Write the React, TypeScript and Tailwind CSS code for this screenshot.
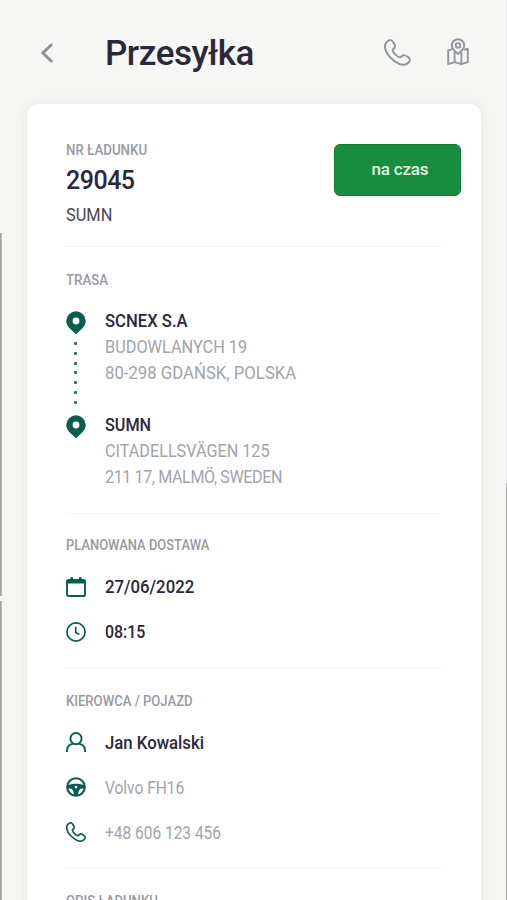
import type { ReactNode } from "react";

function PhoneIcon({ className, stroke }: { className: string; stroke: number }) {
  return (
    <svg viewBox="0 0 26 26" fill="none" stroke="currentColor" strokeWidth={stroke} strokeLinejoin="round" className={className}>
      <path d="M2 3.6C3.2 2 4.6 1 6.3 1C7.6 1 8.3 2.2 9.3 3.8C10.3 5.4 11.2 6.6 10.4 8C9.8 9 8.6 9.6 8.4 10.5C8.2 11.8 10 14 11.4 15.3C13 16.8 14.6 18 15.8 17.6C16.8 17.3 17.4 16 18.6 15.6C19.9 15.2 21.2 16.1 22.6 17C24.2 18 25.2 18.8 25 20.2C24.8 21.7 23.4 23.2 22 24C20 25.1 17.4 25.1 14.6 24C11.2 22.6 8.4 20.4 5.8 17.6C3.2 14.8 1.4 11.6 1 8.6C0.8 6.6 1 5 2 3.6Z" />
    </svg>
  );
}

function MapIcon() {
  return (
    <svg viewBox="0 0 22 28" fill="none" stroke="currentColor" strokeWidth="1.9" strokeLinejoin="round" className="w-[22px] h-[28px]">
      <path d="M11 16C8.4 13.6 4.8 11 4.8 7.4A6.2 6.2 0 0 1 17.2 7.4C17.2 11 13.6 13.6 11 16Z" />
      <circle cx="11" cy="7.4" r="2.3" />
      <path d="M5.6 11.2L1.2 12.4V26.2L7.6 24.2L14.4 26.2L20.8 24.2V10.8L16.4 11.8M7.6 13.6V24.2M14.4 13.6V26.2" />
    </svg>
  );
}

function PinIcon() {
  return (
    <svg viewBox="0 0 20 24" className="w-5 h-6 shrink-0 text-[#075e4f]">
      <path
        fill="currentColor"
        fillRule="evenodd"
        d="M10 0.3A9.7 9.7 0 0 1 19.7 10C19.7 13 18.3 15.4 16.2 17.4L10 23.3L3.8 17.4C1.7 15.4 0.3 13 0.3 10A9.7 9.7 0 0 1 10 0.3ZM10 6.6A3.4 3.4 0 1 0 10 13.4A3.4 3.4 0 0 0 10 6.6Z"
      />
    </svg>
  );
}

function CalendarIcon() {
  return (
    <svg viewBox="0 0 20 20" className="w-5 h-5">
      <rect x="1" y="3" width="18" height="16" rx="1.6" fill="none" stroke="currentColor" strokeWidth="1.9" />
      <path d="M1 3H19V6.4H1ZM4.4 0.2H7V4H4.4ZM13 0.2H15.6V4H13Z" fill="currentColor" />
    </svg>
  );
}

function ClockIcon() {
  return (
    <svg viewBox="0 0 20 20" fill="none" stroke="currentColor" strokeWidth="1.7" className="w-5 h-5">
      <circle cx="10" cy="10" r="9.1" />
      <path d="M9.7 4.8V10.5L13.4 12.6" />
    </svg>
  );
}

function UserIcon() {
  return (
    <svg viewBox="0 0 20 20" fill="none" stroke="currentColor" strokeWidth="1.9" className="w-5 h-5">
      <circle cx="10" cy="6.6" r="5.6" />
      <path d="M1 20V18.6C1 14.8 3.6 12.2 7.4 11.6M19 20V18.6C19 14.8 16.4 12.2 12.6 11.6" />
    </svg>
  );
}

function WheelIcon() {
  return (
    <svg viewBox="0 0 20 20" className="w-5 h-5">
      <circle cx="10" cy="10" r="8.8" fill="none" stroke="currentColor" strokeWidth="2.1" />
      <path
        fill="currentColor"
        fillRule="evenodd"
        d="M1 8.4C6 6.2 14 6.2 19 8.4V11.4H16C13.6 11.6 12.4 13.4 12 19H8C7.6 13.4 6.4 11.6 4 11.4H1ZM10 8.7A1.4 1.4 0 1 0 10 11.5A1.4 1.4 0 0 0 10 8.7Z"
      />
    </svg>
  );
}

function Label({ children, className }: { children: ReactNode; className: string }) {
  return <div className={`origin-left text-[14px] leading-[18px] font-medium text-[#979aa2] ${className}`}>{children}</div>;
}

function Row({ icon, children }: { icon: ReactNode; children: ReactNode }) {
  return (
    <div className="flex items-center h-[26px] gap-[19px]">
      <div className="w-5 text-[#075e4f]">{icon}</div>
      {children}
    </div>
  );
}

export default function App() {
  return (
    <div className="relative h-[900px] overflow-hidden bg-[#f6f6f4] font-['Roboto',sans-serif] whitespace-nowrap text-[#2a2839]">
      {/* Page edges */}
      <div className="absolute left-0 top-[233px] bottom-0 w-[2px] bg-linear-to-r from-[#999999] to-[#c4c4c4]" />
      <div className="absolute left-0 top-[596px] h-[5px] w-[2px] bg-[#f0f0f0]" />
      <div className="absolute right-0 top-0 h-[483px] w-px bg-[#e9eaf5]" />
      <div className="absolute right-0 top-[483px] bottom-0 w-px bg-[#aeaeaa]" />

      {/* Header */}
      <header className="flex items-center h-[104px] pl-[40px] pr-[38px]">
        <svg viewBox="0 0 14 20" fill="none" stroke="#8e9094" strokeWidth="3" strokeLinecap="round" strokeLinejoin="round" className="mt-px w-[14px] h-5">
          <path d="M11.2 2L2.8 10L11.2 18" />
        </svg>
        <h1 className="ml-[51px] mt-[4px] flex-1 text-[35px] leading-[42px] font-medium tracking-[-0.47px]">Przesyłka</h1>
        <PhoneIcon stroke={1.9} className="w-[27px] h-[27px] text-[#92959d]" />
        <div className="ml-[36px] text-[#92959d]">
          <MapIcon />
        </div>
      </header>

      <main className="ml-[27px] mr-[26px] h-[820px] rounded-xl bg-white pl-[39px] pr-[20px] pt-[37px] shadow-[0_0_14px_rgba(0,0,0,0.07)]">
        <div className="flex justify-between h-[105px]">
          <div>
            <Label className="scale-x-[0.95]">NR ŁADUNKU</Label>
            <div className="mt-[7px] text-[25px] leading-[30px] font-medium tracking-[-0.5px]">29045</div>
            <div className="mt-[7px] origin-left scale-x-[0.91] text-[18px] leading-[24px] text-[#4a4953]">SUMN</div>
          </div>
          <div className="mt-[3px] w-[127px] h-[52px] rounded-md bg-[#188d3f] border border-[#0f7d33] pl-[5px] pb-px flex items-center justify-center text-[17px] font-medium tracking-[-0.2px] text-[#e4f5e4]">
            na czas
          </div>
        </div>
        <div className="h-px mr-[20px] bg-[#f3f3f3]" />

        {/* Route */}
        <Label className="mt-[24px] scale-x-[0.95]">TRASA</Label>
        <div className="mt-[19px] flex gap-[19px] text-[18px] leading-[26px]">
          <div className="w-5 flex flex-col items-center pt-[3px]">
            <PinIcon />
            <div className="flex flex-col items-center h-[80px] pt-[7px] pr-px gap-[6.8px]">
              {[0, 1, 2, 3, 4, 5, 6].map((i) => (
                <div key={i} className="w-[3px] h-[3px] shrink-0 rounded-[1px] bg-[#2f6f64]" />
              ))}
            </div>
            <PinIcon />
          </div>
          <div className="text-[#a1a4aa]">
            <div className="origin-left scale-x-[0.925] font-medium text-[#2a2839]">SCNEX S.A</div>
            <div className="origin-left scale-x-[0.905]">BUDOWLANYCH 19</div>
            <div className="origin-left scale-x-[0.93]">80-298 GDAŃSK, POLSKA</div>
            <div className="mt-[26px] origin-left scale-x-[0.9] font-medium text-[#2a2839]">SUMN</div>
            <div className="origin-left scale-x-[0.9]">CITADELLSVÄGEN 125</div>
            <div className="origin-left scale-x-[0.895] tracking-[-0.45px]">211 17, MALMÖ, SWEDEN</div>
          </div>
        </div>
        <div className="mt-[23px] h-px mr-[20px] bg-[#f6f6f6]" />

        {/* Planned delivery */}
        <Label className="mt-[22px] scale-x-[0.925]">PLANOWANA DOSTAWA</Label>
        <div className="mt-[19.5px] flex flex-col gap-[19px] text-[18px] font-medium">
          <Row icon={<CalendarIcon />}>
            <span className="origin-left scale-x-[0.93]">27/06/2022</span>
          </Row>
          <Row icon={<ClockIcon />}>
            <span className="origin-left scale-x-[0.885]">08:15</span>
          </Row>
        </div>
        <div className="mt-[23.5px] h-px mr-[20px] bg-[#f3f3f3]" />

        {/* Driver and vehicle */}
        <Label className="mt-[23px] scale-x-[0.935]">KIEROWCA / POJAZD</Label>
        <div className="mt-[19px] flex flex-col gap-[19px] text-[18px]">
          <Row icon={<UserIcon />}>
            <span className="origin-left scale-x-[0.93] font-medium">Jan Kowalski</span>
          </Row>
          <Row icon={<WheelIcon />}>
            <span className="origin-left scale-x-[0.86] text-[#a1a4aa]">Volvo FH16</span>
          </Row>
          <Row icon={<PhoneIcon stroke={2.2} className="w-5 h-5" />}>
            <span className="origin-left scale-x-[0.86] text-[#a1a4aa]">+48 606 123 456</span>
          </Row>
        </div>
        <div className="mt-[23px] h-px mr-[20px] bg-[#f6f6f6]" />

        <Label className="mt-[22.5px] scale-x-[0.94]">OPIS ŁADUNKU</Label>
      </main>
    </div>
  );
}
